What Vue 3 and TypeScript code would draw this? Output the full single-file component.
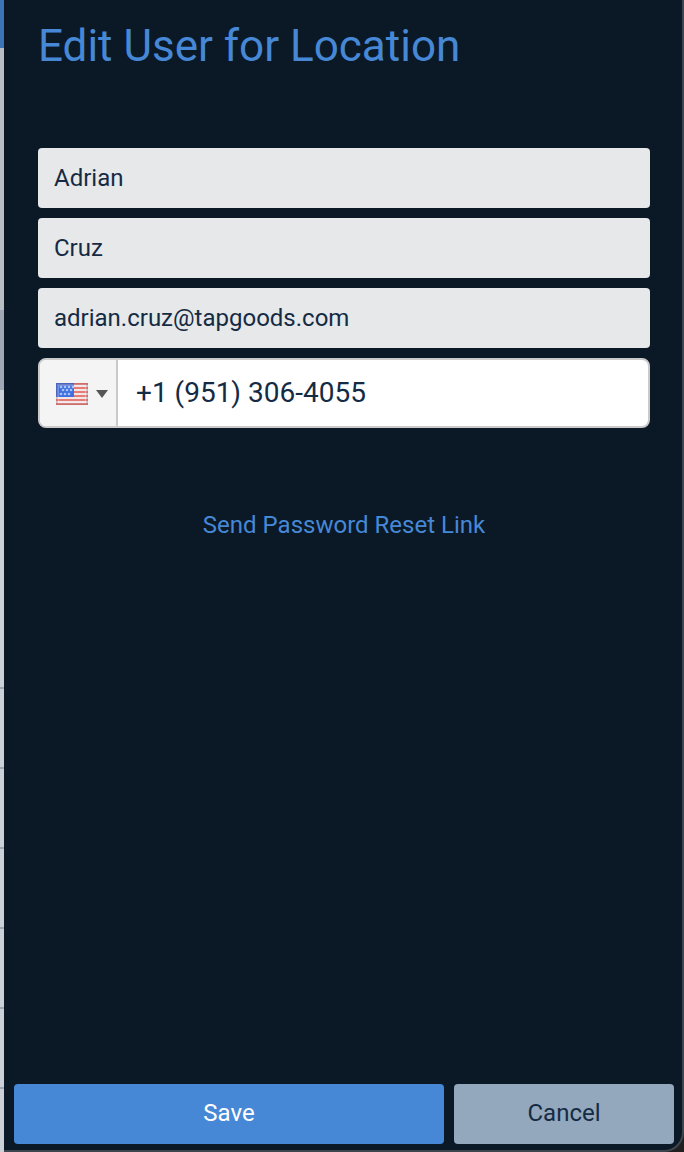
<script setup lang="ts">
import { ref } from 'vue'

const firstName = ref('Adrian')
const lastName = ref('Cruz')
const email = ref('adrian.cruz@tapgoods.com')
const phone = ref('+1 (951) 306-4055')
const rows = [1, 2, 3, 4, 5, 6]
const stripes = [0, 1, 2, 3, 4, 5]
const stars = [
  [5, 4], [9, 4], [13, 4], [17, 4],
  [7, 7], [11, 7], [15, 7],
  [5, 11], [9, 11], [13, 11],
]
</script>

<template>
  <div class="page">
    <div class="backdrop" aria-hidden="true">
      <div class="bar"></div>
      <div class="head"></div>
      <div class="filter"></div>
      <div class="blank"></div>
      <div v-for="r in rows" :key="r" class="line"></div>
    </div>
    <form class="panel" @submit.prevent>
      <div class="content">
        <h1>Edit User for Location</h1>
        <div class="fields">
          <input v-model="firstName" class="field" type="text" aria-label="First name" />
          <input v-model="lastName" class="field" type="text" aria-label="Last name" />
          <input v-model="email" class="field" type="email" aria-label="Email" />
          <div class="phone">
            <button class="country" type="button" aria-label="Country: United States">
              <svg class="flag" viewBox="0 0 32 22" width="32" height="22">
                <rect width="32" height="22" fill="#f1e6e6" />
                <rect v-for="s in stripes" :key="s" x="0" :y="s * 4" width="32" height="2" fill="#e87b75" />
                <rect width="18" height="14" fill="#3f6fe0" />
                <circle v-for="(c, i) in stars" :key="i" :cx="c[0]" :cy="c[1]" r="1.3" fill="#a9c2f7" />
                <rect x="2" y="2" width="28" height="18" fill="none" stroke="#ffffff" stroke-width="2" stroke-opacity="0.25" />
                <rect x="1" y="1" width="30" height="20" fill="none" stroke="#80404c" stroke-width="2" stroke-opacity="0.25" />
              </svg>
              <svg class="arrow" viewBox="0 0 12 8" width="12" height="8">
                <path d="M0 0h12L6 8z" fill="#555555" />
              </svg>
            </button>
            <input v-model="phone" type="tel" aria-label="Phone number" />
          </div>
        </div>
        <a class="reset" href="#">Send Password Reset Link</a>
      </div>
      <div class="actions">
        <button class="save" type="submit">Save</button>
        <button class="cancel" type="button">Cancel</button>
      </div>
    </form>
  </div>
</template>

<style>
body {
  margin: 0;
  background: #211f20;
}
</style>

<style scoped>
.page {
  display: flex;
  min-height: 100vh;
  font-family: Roboto, "Liberation Sans", sans-serif;
}
.page * {
  box-sizing: border-box;
}
.backdrop {
  flex: 0 0 4px;
  background: #cbd1d6;
}
.bar {
  height: 48px;
  background: #3b75b5;
}
.head {
  height: 262px;
  background: #b9bdc4;
}
.filter {
  height: 80px;
  background: #9ea9b5;
}
.blank {
  height: 219px;
}
.line {
  height: 80px;
  border-bottom: 2px solid #9ba8b7;
}
.panel {
  flex: 1;
  min-width: 0;
  display: flex;
  flex-direction: column;
  background: #0b1926;
  border: solid #3d454e;
  border-width: 0 2px 2px 0;
  border-bottom-right-radius: 20px;
}
.content {
  flex: 1;
  display: flex;
  flex-direction: column;
  padding: 20px 32px 40px 34px;
}
h1 {
  margin: 0 0 76px;
  font-size: 44px;
  line-height: 52px;
  font-weight: 400;
  color: #4688d6;
}
.fields {
  display: flex;
  flex-direction: column;
  gap: 10px;
}
input,
button {
  margin: 0;
  font-family: inherit;
  color: #152b44;
}
.field {
  width: 100%;
  height: 60px;
  padding: 0 16px;
  border: 0;
  border-radius: 4px;
  background: #e6e8ea;
  font-size: 24px;
}
.phone {
  display: flex;
  height: 70px;
  border: 2px solid #cacaca;
  border-radius: 8px;
  background: #ffffff;
  overflow: hidden;
}
.country {
  flex: 0 0 78px;
  display: flex;
  align-items: center;
  gap: 8px;
  padding: 2px 0 0 16px;
  border: 0;
  border-right: 2px solid #cacaca;
  background: #f4f4f4;
}
.phone input {
  flex: 1;
  min-width: 0;
  padding: 0 18px 2px;
  border: 0;
  background: transparent;
  font-size: 28px;
}
.reset {
  align-self: center;
  margin-top: 82px;
  font-size: 24px;
  line-height: 30px;
  color: #4688d6;
  text-decoration: none;
}
.actions {
  display: flex;
  gap: 10px;
  padding: 0 8px 6px 10px;
}
.actions button {
  height: 60px;
  padding: 0 0 2px;
  border: 0;
  border-radius: 4px;
  font-size: 24px;
}
.actions .save {
  flex: 1;
  background: #4688d6;
  color: #ffffff;
}
.actions .cancel {
  flex: 0 0 220px;
  background: #93a8bd;
}
</style>
